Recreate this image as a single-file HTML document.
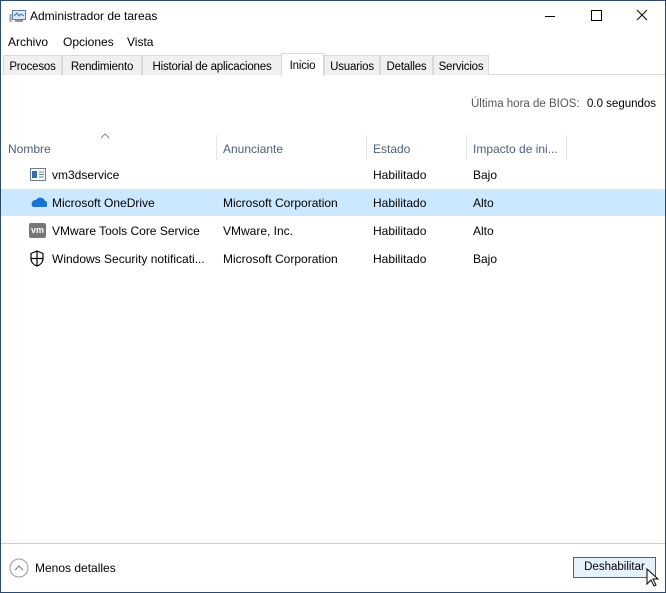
<!DOCTYPE html><html><head><style>
*{margin:0;padding:0;box-sizing:border-box}
body{width:666px;height:593px;position:relative;background:#fff;font-family:"Liberation Sans",sans-serif;font-size:12px;color:#000;overflow:hidden}
.a{position:absolute;white-space:nowrap}
.win{position:absolute;left:0;top:0;width:666px;height:593px;border:1px solid #2b4a6b}
.tab{position:absolute;top:55px;height:20px;background:#f0f0f0;border:1px solid #d9d9d9;border-bottom:none;padding:5px 0 0 0;white-space:nowrap;overflow:hidden;text-align:center;font-size:11.5px;letter-spacing:-0.2px}
.hd{color:#4c607a}
.sep{position:absolute;top:135px;width:1px;height:25px;background:#e5e5e5}
</style></head><body>
<div class="win"></div>
<svg class="a" style="left:9px;top:8px" width="18" height="16" viewBox="0 0 18 16"><rect x="3.5" y="2.5" width="13" height="9" fill="#dfe9f5" stroke="#5a7ea8"/><path d="M5 8l3-3 2 3 2-2 3 2" fill="none" stroke="#2f6db5"/><rect x="0.5" y="6" width="2" height="8" fill="#999"/><rect x="6" y="12" width="8" height="2" fill="#999"/></svg>
<div class="a" style="left:30px;top:9px;font-size:12px">Administrador de tareas</div>
<svg class="a" style="left:545px;top:9px" width="110" height="14"><path d="M0 7.5h10" stroke="#000"/><rect x="46.5" y="1.5" width="10" height="10" fill="none" stroke="#000"/><path d="M92 1l10 10M102 1l-10 10" stroke="#000"/></svg>
<div class="a" style="left:8px;top:35px">Archivo</div>
<div class="a" style="left:63px;top:35px">Opciones</div>
<div class="a" style="left:127px;top:35px">Vista</div>
<div class="a" style="left:1px;top:74px;width:664px;height:1px;background:#d9d9d9"></div>
<div class="tab" style="left:3px;width:59px">Procesos</div>
<div class="tab" style="left:62px;width:80px">Rendimiento</div>
<div class="tab" style="left:142px;width:140px">Historial de aplicaciones</div>
<div class="tab" style="left:281px;top:53px;height:23px;width:43px;background:#fff;padding-top:6px">Inicio</div>
<div class="tab" style="left:324px;width:56px">Usuarios</div>
<div class="tab" style="left:380px;width:53px">Detalles</div>
<div class="tab" style="left:433px;width:56px">Servicios</div>
<div class="a" style="left:471px;top:98px;color:#555;font-size:11.5px">Última hora de BIOS:</div>
<div class="a" style="left:587px;top:98px;font-size:11.5px">0.0 segundos</div>
<svg class="a" style="left:100px;top:133px" width="10" height="6"><path d="M1 5l4-4 4 4" fill="none" stroke="#888"/></svg>
<div class="a hd" style="left:8px;top:142px">Nombre</div>
<div class="a hd" style="left:223px;top:142px">Anunciante</div>
<div class="a hd" style="left:373px;top:142px">Estado</div>
<div class="a hd" style="left:473px;top:142px">Impacto de ini...</div>
<div class="sep" style="left:216px"></div><div class="sep" style="left:366px"></div><div class="sep" style="left:466px"></div><div class="sep" style="left:566px"></div>
<div class="a" style="left:1px;top:189px;width:664px;height:27px;background:#cce8ff"></div>
<svg class="a" style="left:30px;top:168px" width="16" height="13"><rect x="0.5" y="0.5" width="15" height="12" fill="#fff" stroke="#6b7c8f"/><rect x="2" y="3" width="5" height="7" fill="#2f6db5"/><path d="M9 4h5M9 6.5h5M9 9h5" stroke="#6b7c8f"/></svg>
<div class="a" style="left:52px;top:168px">vm3dservice</div>
<svg class="a" style="left:29px;top:196px" width="18" height="12"><path d="M4 11h12a3 3 0 0 0 0-6 5 5 0 0 0-9-1 4 4 0 0 0-3 7z" fill="#1a73d0"/></svg>
<div class="a" style="left:52px;top:196px">Microsoft OneDrive</div>
<div class="a" style="left:223px;top:196px">Microsoft Corporation</div>
<div class="a" style="left:373px;top:196px">Habilitado</div>
<div class="a" style="left:473px;top:196px">Alto</div>
<div class="a" style="left:29px;top:223px;width:17px;height:15px;background:#777;color:#fff;font-size:9px;font-weight:bold;text-align:center;line-height:15px;border-radius:2px">vm</div>
<div class="a" style="left:52px;top:224px">VMware Tools Core Service</div>
<div class="a" style="left:223px;top:224px">VMware, Inc.</div>
<div class="a" style="left:373px;top:224px">Habilitado</div>
<div class="a" style="left:473px;top:224px">Alto</div>
<svg class="a" style="left:29px;top:250px" width="16" height="17"><path d="M8 1l6 2.5v5c0 4-3 6.5-6 7.5-3-1-6-3.5-6-7.5v-5z" fill="none" stroke="#000" stroke-width="1.2"/><path d="M8 1v15M2 8.5h12" stroke="#000" stroke-width="1.2"/></svg>
<div class="a" style="left:52px;top:252px">Windows Security notificati...</div>
<div class="a" style="left:223px;top:252px">Microsoft Corporation</div>
<div class="a" style="left:373px;top:252px">Habilitado</div>
<div class="a" style="left:473px;top:252px">Bajo</div>
<div class="a" style="left:373px;top:168px">Habilitado</div>
<div class="a" style="left:473px;top:168px">Bajo</div>
<div class="a" style="left:1px;top:543px;width:664px;height:1px;background:#ccc"></div>
<svg class="a" style="left:9px;top:558px" width="20" height="20"><circle cx="10" cy="10" r="9" fill="none" stroke="#999"/><path d="M6 12l4-4 4 4" fill="none" stroke="#777"/></svg>
<div class="a" style="left:35px;top:561px">Menos detalles</div>
<div class="a" style="left:573px;top:557px;width:83px;height:21px;background:#e5f1fb;border:1px solid #0078d7;text-align:center;line-height:19px;font-size:11.5px">Deshabilitar</div>
<svg class="a" style="left:646px;top:568px" width="14" height="20"><path d="M1 1v15l4-4 3 6 2-1-3-6h5z" fill="#fff" stroke="#000"/></svg>
</body></html>
